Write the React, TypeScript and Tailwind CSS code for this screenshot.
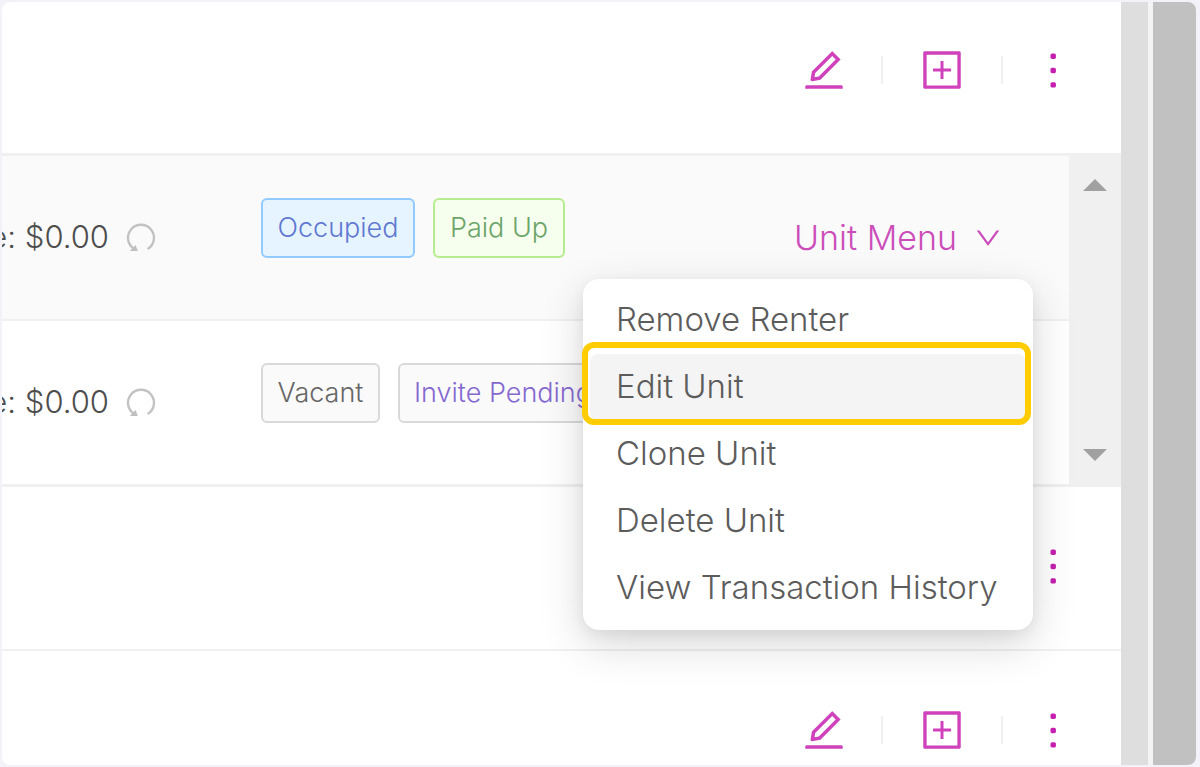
import { clsx } from "clsx";
import {
  AiOutlineDown,
  AiOutlineEdit,
  AiOutlinePlusSquare,
} from "react-icons/ai";

type TagTone = "blue" | "green" | "gray" | "purple";

const toneClasses: Record<TagTone, string> = {
  blue: "w-[154px] border-[#91caff] bg-[#e6f4ff] text-[#5f78d2]",
  green: "w-[132px] border-[#b7eb8f] bg-[#f6ffed] text-[#6ca46a]",
  gray: "w-[119px] border-[#d9d9d9] bg-[#fafafa] text-[#666666]",
  purple: "w-[210px] border-[#d9d9d9] bg-[#fafafa] text-[#8468d0]",
};

const menuItems = [
  "Remove Renter",
  "Edit Unit",
  "Clone Unit",
  "Delete Unit",
  "View Transaction History",
];

function Tag({ tone, children }: { tone: TagTone; children: string }) {
  return (
    <span
      className={clsx(
        "flex h-[60px] shrink-0 items-center justify-center whitespace-nowrap rounded-md border-2 text-[27px] leading-8",
        toneClasses[tone],
      )}
    >
      {children}
    </span>
  );
}

function ReloadIcon() {
  return (
    <svg className="size-8" viewBox="0 0 32 32" fill="none" aria-hidden>
      <path
        d="M9.4 27A13 13 0 1 1 22.6 27"
        stroke="#c2c2c2"
        strokeWidth="2.4"
      />
      <path d="M4.8 29 10.6 23 12.8 29Z" fill="#bfbfbf" />
    </svg>
  );
}

function MoreButton() {
  return (
    <button
      type="button"
      aria-label="More"
      className="flex w-[52px] justify-center"
    >
      <svg className="h-9 w-2" viewBox="0 0 8 36" fill="currentColor" aria-hidden>
        <rect x="1.5" y="1.5" width="5.4" height="5.4" rx="1.6" />
        <rect x="1.5" y="15.8" width="5.4" height="5.4" rx="1.6" />
        <rect x="1.5" y="30.2" width="5.4" height="5.4" rx="1.6" />
      </svg>
    </button>
  );
}

function PropertyActions() {
  return (
    <div className="flex h-12 items-center justify-end pr-[42px] text-[#c41fae]">
      <button type="button" aria-label="Edit" className="flex text-[#cf42bb]">
        <AiOutlineEdit className="size-12" />
      </button>
      <span className="ml-[33px] mr-[35px] h-7 w-[2px] bg-[#f0f0f0]" />
      <button type="button" aria-label="Add unit" className="flex text-[#cf42bb]">
        <AiOutlinePlusSquare className="size-12" />
      </button>
      <span className="ml-[35px] mr-6 h-7 w-[2px] bg-[#f0f0f0]" />
      <MoreButton />
    </div>
  );
}

function Balance() {
  return (
    <div className="flex w-[259px] shrink-0 items-center">
      <div className="flex w-[107px] justify-end overflow-hidden whitespace-nowrap text-[31px] text-[#4d4d4d]">
        e: $0.00
      </div>
      <button type="button" aria-label="Refresh balance" className="ml-4">
        <ReloadIcon />
      </button>
    </div>
  );
}

function UnitMenu() {
  return (
    <div className="relative ml-auto mr-[66px]">
      <button
        type="button"
        className="flex h-12 items-center gap-4 whitespace-nowrap text-[34px] text-[#cb4dba]"
      >
        Unit Menu
        <AiOutlineDown className="size-[30px]" />
      </button>
      <ul className="absolute -right-[30px] top-full z-10 mt-[17px] w-[450px] rounded-2xl bg-white px-[7px] py-2 shadow-[0_14px_44px_rgba(0,0,0,0.16),0_4px_14px_rgba(0,0,0,0.06)]">
        {menuItems.map((item) => {
          const active = item === "Edit Unit";
          return (
            <li key={item} className="relative">
              <button
                type="button"
                className={clsx(
                  "flex h-[67px] w-full items-center whitespace-nowrap rounded-lg px-[26px] text-left text-[33px] text-[#5c5c5c]",
                  active && "bg-[#f4f4f4]",
                )}
              >
                {item}
              </button>
              {active && (
                <span className="pointer-events-none absolute -left-2 -right-[5px] -bottom-1 -top-3 rounded-xl border-[6px] border-[#ffcc00]" />
              )}
            </li>
          );
        })}
      </ul>
    </div>
  );
}

export default function App() {
  return (
    <div className="flex min-h-screen bg-[#f2f2f8] py-[2px] pl-[2px] pr-1 font-['Inter',sans-serif] font-light">
      <div className="flex flex-1 overflow-hidden rounded-lg bg-white">
        <main className="flex min-w-0 flex-1 flex-col">
          <section className="h-[154px] border-b-[3px] border-[#f0f0f0] pt-11">
            <PropertyActions />
          </section>

          <section className="flex border-b-[3px] border-[#f0f0f0]">
            <div className="min-w-0 flex-1">
              <div className="flex h-[165px] items-center border-b-2 border-[#f0f0f0] bg-[#fafafa]">
                <Balance />
                <div className="mb-5 flex gap-[18px]">
                  <Tag tone="blue">Occupied</Tag>
                  <Tag tone="green">Paid Up</Tag>
                </div>
                <UnitMenu />
              </div>
              <div className="flex h-[163px] items-center">
                <Balance />
                <div className="mb-5 flex gap-[18px]">
                  <Tag tone="gray">Vacant</Tag>
                  <Tag tone="purple">Invite Pending</Tag>
                </div>
              </div>
            </div>
            <div className="flex w-[52px] flex-col items-center justify-between bg-[#f0f0f0] py-[23px]">
              <svg className="h-3 w-6" viewBox="0 0 24 12" aria-hidden>
                <path d="M0 12 12 0 24 12Z" fill="#a0a0a0" />
              </svg>
              <svg className="h-3 w-6" viewBox="0 0 24 12" aria-hidden>
                <path d="M0 0H24L12 12Z" fill="#a0a0a0" />
              </svg>
            </div>
          </section>

          <section className="flex h-[164px] items-center justify-end border-b-2 border-[#f0f0f0] pb-1 pr-[42px] text-[#c41fae]">
            <MoreButton />
          </section>

          <section className="pt-[55px]">
            <PropertyActions />
          </section>
        </main>

        <div className="w-[27px] bg-[#dedede]" />
        <div className="w-[5px] bg-[#f3f3f3]" />
        <div className="w-[43px] bg-[#c1c1c1]" />
      </div>
    </div>
  );
}
